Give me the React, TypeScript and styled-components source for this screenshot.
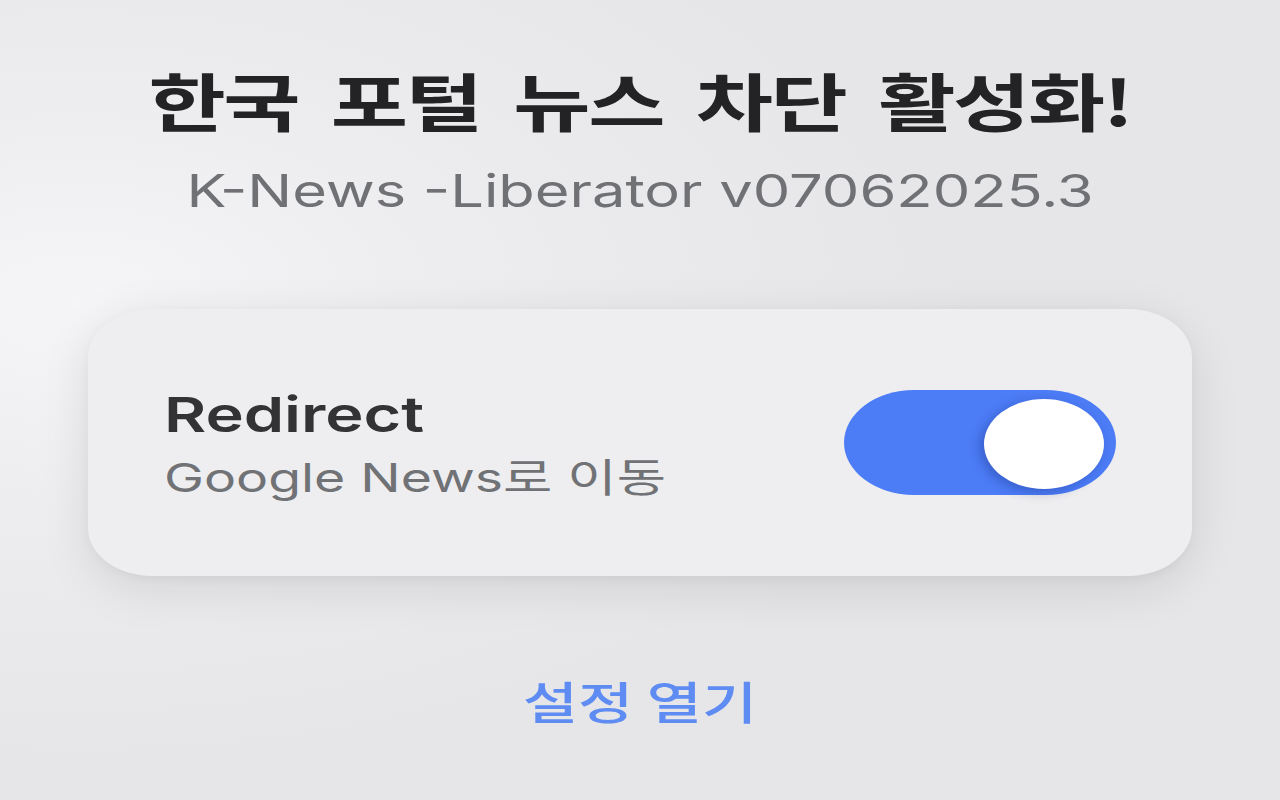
import styled, { createGlobalStyle } from "styled-components"
import { useState } from "react"

// the popup is drawn at its own size (320 wide) and blown up to the window,
// 4x across and 3x down, like the screenshot
const SCALE_X = 4
const SCALE_Y = 3

const GlobalStyle = createGlobalStyle`
    html, body {
        margin: 0;
        padding: 0;
        width: 1280px;
        height: 800px;
        overflow: hidden;
        background: #e8e8ea;
    }
    * {
        box-sizing: border-box;
    }
`

export default function App() {
    const [redirect, setRedirect] = useState(true)
    return (
        <>
            <GlobalStyle />
            <Stage>
                <Popup $sx={SCALE_X} $sy={SCALE_Y}>
                    <Title>한국 포털 뉴스 차단 활성화!</Title>
                    <Version>K-News -Liberator v07062025.3</Version>

                    <OptionCard>
                        <OptionText>
                            <OptionName>Redirect</OptionName>
                            <OptionDesc>Google News로 이동</OptionDesc>
                        </OptionText>
                        <Toggle $on={redirect} onClick={() => setRedirect(!redirect)}>
                            <Knob $on={redirect} />
                        </Toggle>
                    </OptionCard>

                    <SettingsLink href="#">설정 열기</SettingsLink>
                </Popup>
            </Stage>
        </>
    )
}

const Stage = styled.div`
    width: 1280px;
    height: 800px;
    overflow: hidden;
    background: radial-gradient(ellipse 70% 60% at 6% 38%, #f5f5f7 0%, #ebebed 55%, #e6e6e8 100%);
`
const Popup = styled.div<{ $sx: number; $sy: number }>`
    width: 320px;
    height: 266.67px;
    transform: scale(${p => p.$sx}, ${p => p.$sy});
    transform-origin: 0 0;
    display: flex;
    flex-direction: column;
    align-items: center;
    padding: 20px 22px 0;
    font-family: "Inter", "Noto Sans CJK KR", sans-serif;
`
const Title = styled.h1`
    margin: 0;
    font-family: "Noto Sans CJK KR", sans-serif;
    font-weight: 700;
    font-size: 21px;
    line-height: 26px;
    letter-spacing: -0.6px;
    word-spacing: 4px;
    color: #232325;
    white-space: nowrap;
`
const Version = styled.p`
    margin: 8px 0 0;
    font-size: 14.9px;
    line-height: 20px;
    font-weight: 400;
    color: #6f7175;
    white-space: nowrap;
`
const OptionCard = styled.div`
    margin-top: 29px;
    width: 276px;
    height: 89px;
    flex-shrink: 0;
    display: flex;
    align-items: center;
    justify-content: space-between;
    padding: 0 19px 0 19px;
    background: #eeeef0;
    border-radius: 16px;
    box-shadow: 0 4px 14px rgba(0, 0, 0, 0.1), 0 1px 3px rgba(0, 0, 0, 0.04);
`
const OptionText = styled.div`
    display: flex;
    flex-direction: column;
    gap: 2px;
`
const OptionName = styled.span`
    font-size: 16.2px;
    line-height: 20px;
    font-weight: 600;
    color: #333336;
`
const OptionDesc = styled.span`
    font-size: 13.4px;
    line-height: 18px;
    color: #707276;
    white-space: nowrap;
`
const Toggle = styled.div<{ $on: boolean }>`
    width: 68px;
    height: 35px;
    border-radius: 18px;
    padding: 2.7px;
    display: flex;
    justify-content: ${p => (p.$on ? "flex-end" : "flex-start")};
    background: ${p => (p.$on ? "#4c7cf6" : "#c9c9cd")};
    cursor: pointer;
`
const Knob = styled.div<{ $on: boolean }>`
    width: 30px;
    height: 30px;
    border-radius: 50%;
    background: #ffffff;
    box-shadow: -1px 1px 3px rgba(20, 40, 120, 0.35);
`
const SettingsLink = styled.a`
    margin-top: 32px;
    font-family: "Noto Sans CJK KR", sans-serif;
    font-size: 15px;
    line-height: 20px;
    font-weight: 500;
    letter-spacing: 0px;
    color: #5e8cf2;
    text-decoration: none;
`
